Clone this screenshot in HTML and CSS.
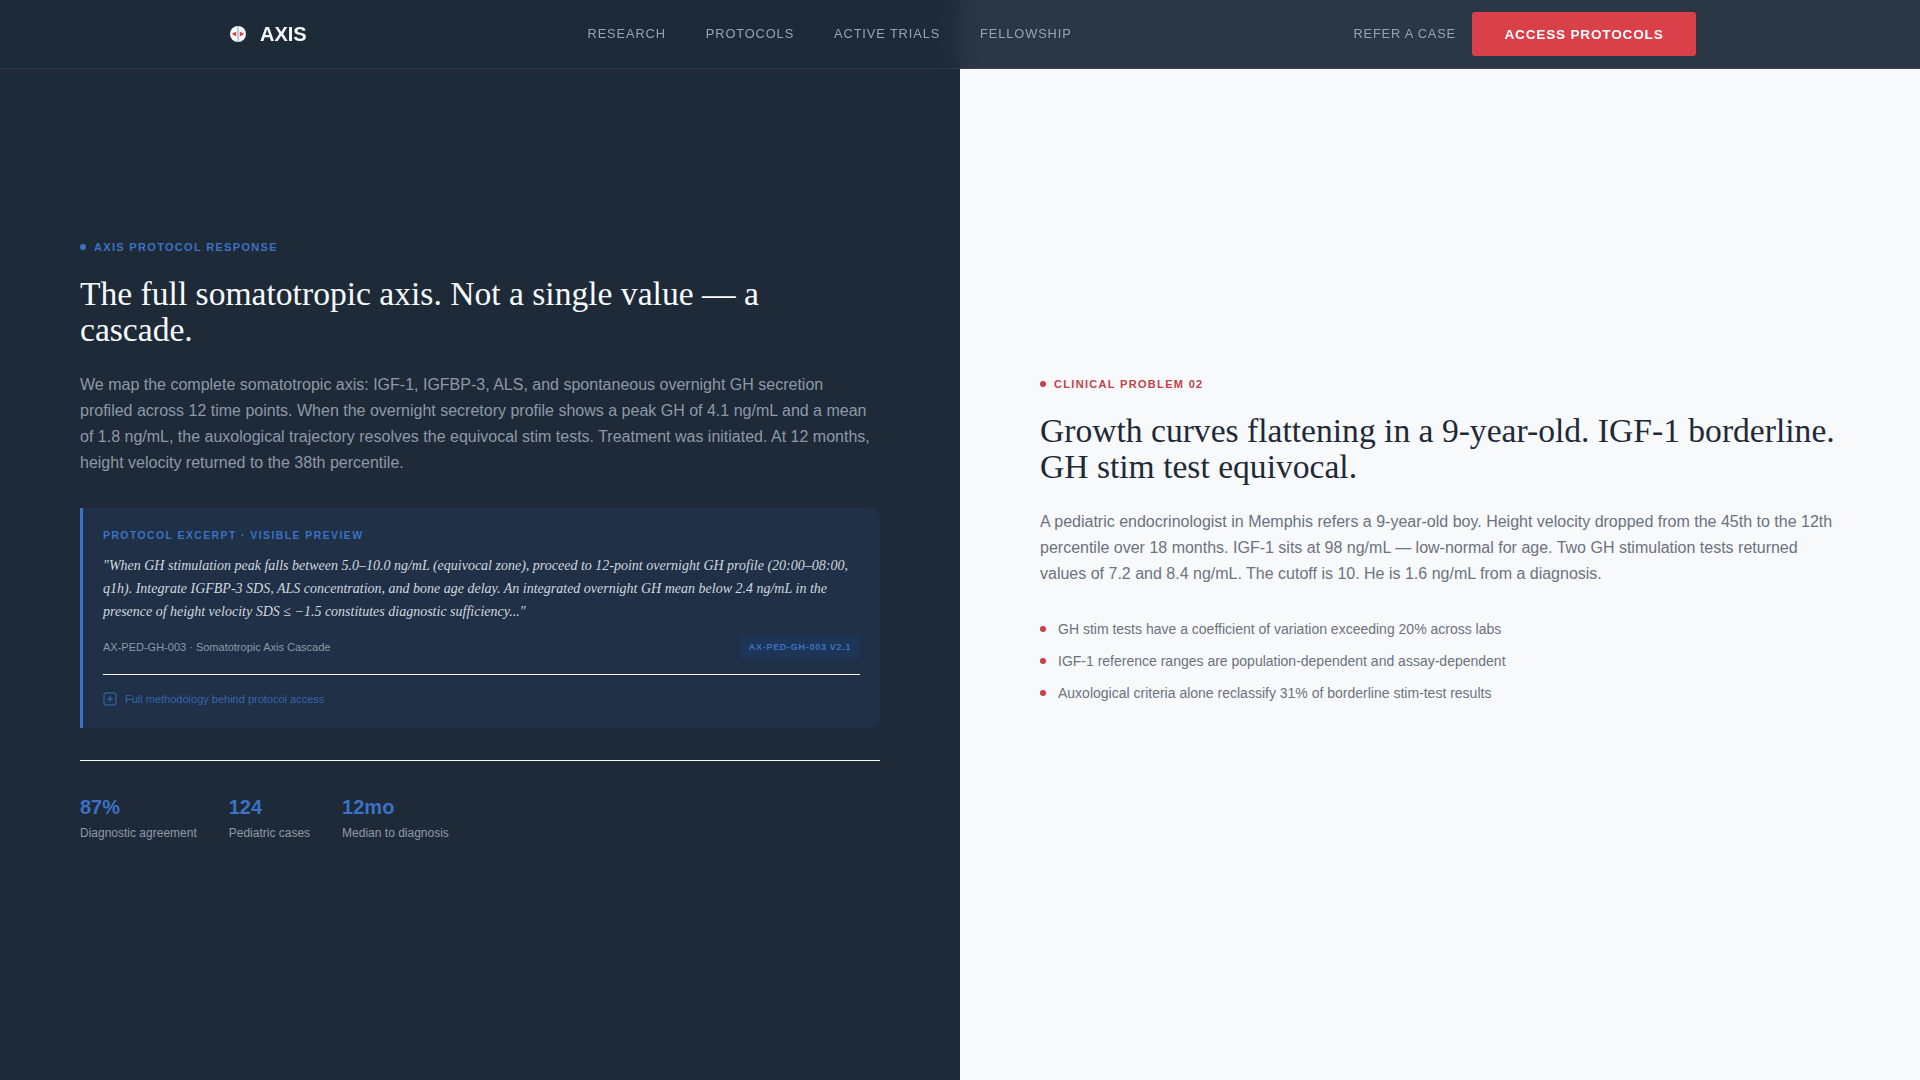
FILE: index.html
```html
<!DOCTYPE html>
<html lang="en">
<head>
<meta charset="utf-8">
<title>AXIS</title>
<link rel="stylesheet" href="styles.css">
</head>
<body>
<header class="nav">
  <div class="nav-inner">
    <a class="logo" href="#">
      <svg class="logo-mark" viewBox="0 0 28 28" width="28" height="28" aria-hidden="true">
        <circle cx="14" cy="14" r="8" fill="#f7fafc"/>
        <rect x="13.3" y="6" width="1.4" height="16" fill="#9db8de"/>
        <path d="M7.8 14l4.4-2.4v4.8z M20.2 14l-4.4-2.4v4.8z" fill="#d9404a"/>
      </svg>
      <span>AXIS</span>
    </a>
    <nav class="nav-links">
      <a href="#">Research</a>
      <a href="#">Protocols</a>
      <a href="#">Active Trials</a>
      <a href="#">Fellowship</a>
    </nav>
    <div class="nav-actions">
      <a class="refer" href="#">Refer a case</a>
      <a class="cta" href="#">Access Protocols</a>
    </div>
  </div>
</header>
<main class="split">
  <section class="panel panel-dark">
    <div class="eyebrow eyebrow-blue"><i class="dot"></i>AXIS Protocol Response</div>
    <h2 class="title title-light">The full somatotropic axis. Not a single value — a cascade.</h2>
    <p class="lead lead-dark">We map the complete somatotropic axis: IGF-1, IGFBP-3, ALS, and spontaneous overnight GH secretion profiled across 12 time points. When the overnight secretory profile shows a peak GH of 4.1 ng/mL and a mean of 1.8 ng/mL, the auxological trajectory resolves the equivocal stim tests. Treatment was initiated. At 12 months, height velocity returned to the 38th percentile.</p>
    <div class="card">
      <div class="card-label">Protocol Excerpt · Visible Preview</div>
      <p class="quote">"When GH stimulation peak falls between 5.0–10.0 ng/mL (equivocal zone), proceed to 12-point overnight GH profile (20:00–08:00, q1h). Integrate IGFBP-3 SDS, ALS concentration, and bone age delay. An integrated overnight GH mean below 2.4 ng/mL in the presence of height velocity SDS ≤ −1.5 constitutes diagnostic sufficiency..."</p>
      <div class="card-meta">
        <span>AX-PED-GH-003 · Somatotropic Axis Cascade</span>
        <span class="tag">AX-PED-GH-003 v2.1</span>
      </div>
      <div class="card-foot">
        <svg viewBox="0 0 14 14" width="14" height="14" aria-hidden="true">
          <rect x="1" y="1" width="12" height="12" rx="2" fill="none" stroke="#3b6fbe" stroke-width="1"/>
          <path d="M7 4v6M4 7h6" stroke="#3b6fbe" stroke-width="1" fill="none"/>
        </svg>
        <span>Full methodology behind protocol access</span>
      </div>
    </div>
    <div class="stats">
      <div class="stat"><strong>87%</strong><span>Diagnostic agreement</span></div>
      <div class="stat"><strong>124</strong><span>Pediatric cases</span></div>
      <div class="stat"><strong>12mo</strong><span>Median to diagnosis</span></div>
    </div>
  </section>
  <section class="panel panel-light">
    <div class="eyebrow eyebrow-red"><i class="dot"></i>Clinical Problem 02</div>
    <h2 class="title title-dark">Growth curves flattening in a 9-year-old. IGF-1 borderline. GH stim test equivocal.</h2>
    <p class="lead lead-light">A pediatric endocrinologist in Memphis refers a 9-year-old boy. Height velocity dropped from the 45th to the 12th percentile over 18 months. IGF-1 sits at 98 ng/mL — low-normal for age. Two GH stimulation tests returned values of 7.2 and 8.4 ng/mL. The cutoff is 10. He is 1.6 ng/mL from a diagnosis.</p>
    <ul class="bullets">
      <li>GH stim tests have a coefficient of variation exceeding 20% across labs</li>
      <li>IGF-1 reference ranges are population-dependent and assay-dependent</li>
      <li>Auxological criteria alone reclassify 31% of borderline stim-test results</li>
    </ul>
  </section>
</main>
</body>
</html>
```
FILE: styles.css
```css
* { box-sizing: border-box; }
html, body { margin: 0; height: 100%; }
body { font-family: "Liberation Sans", Arial, sans-serif; overflow: hidden; }
a { text-decoration: none; color: inherit; }

.nav {
  position: fixed; top: 0; left: 0; right: 0; z-index: 10;
  height: 69px;
  background: rgba(30, 42, 56, 0.94);
  backdrop-filter: blur(12px);
  border-bottom: 1px solid rgba(255, 255, 255, 0.06);
}
.nav-inner {
  height: 68px; padding: 0 224px;
  display: flex; align-items: center; justify-content: space-between;
}
.logo { display: flex; align-items: center; gap: 8px; color: #f7fafc; font-size: 20px; font-weight: 700; }
.logo-mark { display: block; }
.nav-links { display: flex; gap: 40px; margin: 0 1px 1px 0; font-size: 12.8px; letter-spacing: 0.9px; text-transform: uppercase; color: #98a3b1; }
.nav-actions { display: flex; align-items: center; gap: 16px; }
.refer { font-size: 12.8px; letter-spacing: 0.84px; text-transform: uppercase; color: #98a3b1; margin-bottom: 1px; }
.cta {
  display: flex; align-items: center; justify-content: center;
  width: 224px; height: 44px; border-radius: 3px;
  background: #d9404a; color: #fff;
  font-size: 13.6px; font-weight: 700; letter-spacing: 0.8px; text-transform: uppercase;
}

.split { display: grid; grid-template-columns: 1fr 1fr; height: 1080px; }
.panel { padding: 0 80px; display: flex; flex-direction: column; justify-content: center; }
.panel-dark { background: #1e2a38; padding-top: 2px; }
.panel-light { background: #f8f9fb; }

.eyebrow { display: flex; align-items: center; gap: 8px; font-size: 11px; font-weight: 700; letter-spacing: 1.32px; text-transform: uppercase; line-height: 14px; margin-bottom: 22px; }
.dot { width: 6px; height: 6px; border-radius: 50%; background: currentColor; }
.eyebrow-blue { color: #3b72c4; }
.eyebrow-red { color: #c5404a; }

.title { margin: 0 0 24px; font-family: "Liberation Serif", "Times New Roman", serif; font-weight: 400; font-size: 33.6px; line-height: 35.6px; }
.title-light { color: #f7fafc; }
.title-dark { color: #1e2a38; }

.lead { margin: 0; font-size: 16px; line-height: 26px; }
.lead-dark { color: #8e99a8; }
.lead-light { color: #6b7280; }

.card {
  margin-top: 32px;
  padding: 21px 20px 20px;
  background: #1f3047;
  border-left: 3px solid #3b72c4;
  border-radius: 0 10px 10px 0;
}
.card-label { font-size: 10.4px; font-weight: 700; letter-spacing: 1.456px; text-transform: uppercase; color: #3b72c4; line-height: 14px; margin-bottom: 11px; }
.quote { margin: 0 0 13px; font-family: "Liberation Serif", "Times New Roman", serif; font-style: italic; font-size: 14px; line-height: 23px; color: #d3d8df; }
.card-meta { display: flex; justify-content: space-between; align-items: center; font-size: 11px; color: #8e99a8; padding-bottom: 16px; border-bottom: 1px solid #f7fafc; }
.tag { width: 120px; height: 22px; display: flex; align-items: center; justify-content: center; background: #1e3555; color: #3b72c4; border-radius: 3px; font-size: 9px; font-weight: 700; letter-spacing: 0.72px; text-transform: uppercase; }
.card-foot { display: flex; align-items: center; gap: 8px; padding-top: 15px; font-size: 11px; line-height: 18px; color: #3766ad; }
.card-foot svg { display: block; }

.stats { margin-top: 32px; padding-top: 31px; border-top: 1px solid #f7fafc; display: flex; gap: 32px; }
.stat { display: flex; flex-direction: column; gap: 2px; }
.stat strong { font-size: 20px; line-height: 30px; font-weight: 700; color: #3b72c4; }
.stat span { font-size: 12px; line-height: 18px; color: #8e99a8; }

.bullets { list-style: none; margin: 32px 0 0; padding: 0; display: flex; flex-direction: column; gap: 12px; }
.bullets li { display: flex; align-items: center; gap: 12px; font-size: 14px; line-height: 20px; color: #6b7280; }
.bullets li::before { content: ""; width: 6px; height: 6px; border-radius: 50%; background: #c5404a; flex: none; }
```
